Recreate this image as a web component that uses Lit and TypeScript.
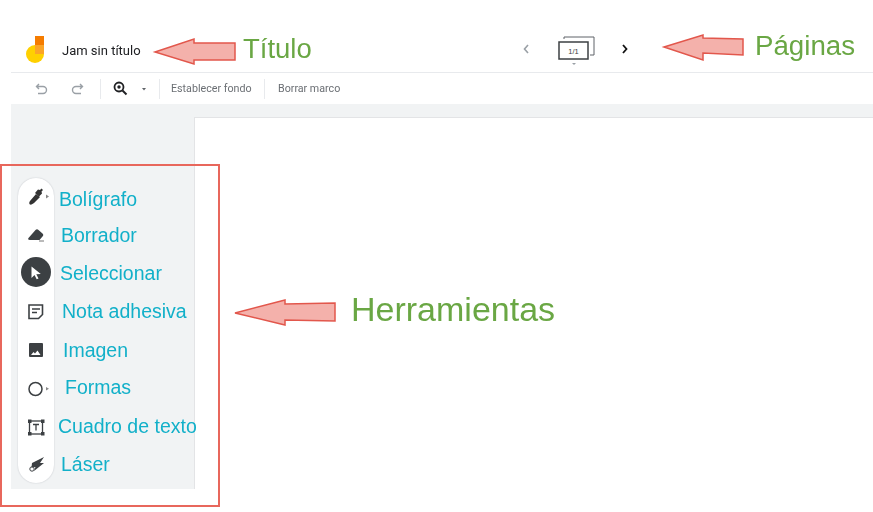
import { LitElement, html, css, svg } from "lit";
import { customElement } from "lit/decorators.js";

const tools = [
  svg`<path d="M30 201l6-7 4 3-6 6c-1 1-3 2-4 1.500s-1-2.500 0-3.500z" fill="#333"/><path d="M35 193l3-3.500 2 .5 1.500-1.500 1.500 1.500-1.500 1.500 .5 2-3 3z" fill="#333"/><path d="M46 194.500l3 2-3 2z" fill="#888"/>`,
  svg`<path d="M28.500 238l7-8c1-1 2-1 3 0l4 3.500c1 1 1 2 0 3l-3 3.500H30c-1.500 0-2.500-1-1.500-2z" fill="#3c4043"/><path d="M39 241h5" stroke="#777" stroke-width="1"/>`,
  svg`<circle cx="36" cy="272" r="15" fill="#3c4043"/><path d="M31.500 266.500l0 11.500 3-3 2.200 4.300 1.800-.9-2.200-4.200 4.500-.2z" fill="#fff"/>`,
  svg`<path d="M29 305h13.500v9.500l-4 4H29z" fill="none" stroke="#3c4043" stroke-width="1.600"/><path d="M32 309h8M32 312.500h5" stroke="#3c4043" stroke-width="1.300"/>`,
  svg`<rect x="29" y="343" width="14" height="14" rx="1" fill="#3c4043"/><path d="M31 355l2.500-3 1.500 1.500 2.500-3 3 4.500z" fill="#fff"/>`,
  svg`<circle cx="35.500" cy="389" r="6.500" fill="none" stroke="#3c4043" stroke-width="1.500"/><path d="M46 387l3 1.800-3 1.800z" fill="#888"/>`,
  svg`<rect x="29.500" y="421" width="13" height="13" fill="none" stroke="#3c4043" stroke-width="1.300"/><rect x="28" y="419.500" width="3.500" height="3.500" fill="#3c4043"/><rect x="41" y="419.500" width="3.500" height="3.500" fill="#3c4043"/><rect x="28" y="432" width="3.500" height="3.500" fill="#3c4043"/><rect x="41" y="432" width="3.500" height="3.500" fill="#3c4043"/><path d="M33 424.500h6M36 424.500v6" stroke="#3c4043" stroke-width="1.300" fill="none"/>`,
  svg`<path d="M32 463l12-6-4 6h4l-10 8 1.500-4-4 .5z" fill="#3c4043"/><circle cx="32" cy="469" r="2.200" fill="none" stroke="#3c4043"/>`,
];

const labels = [
  { t: "Bolígrafo", x: 59, y: 199.5 },
  { t: "Borrador", x: 61, y: 235.5 },
  { t: "Seleccionar", x: 60, y: 273.5 },
  { t: "Nota adhesiva", x: 62, y: 311.5 },
  { t: "Imagen", x: 63, y: 350.5 },
  { t: "Formas", x: 65, y: 387.5 },
  { t: "Cuadro de texto", x: 58, y: 426.5 },
  { t: "Láser", x: 61, y: 464.5 },
];

const heads = [
  { t: "Título", x: 243, y: 48.5, s: 27.5 },
  { t: "Páginas", x: 755, y: 46, s: 27.7 },
  { t: "Herramientas", x: 351, y: 309, s: 34 },
];

@customElement("app-root")
export class AppRoot extends LitElement {
  static styles = css`
    :host { display: block; width: 873px; height: 512px; position: relative; overflow: hidden; background: #fff; font-family: Roboto, "Liberation Sans", sans-serif; }
    .app { margin-left: 11px; height: 489px; display: flex; flex-direction: column; filter: blur(0.35px); }
    .header { height: 73px; box-sizing: border-box; border-bottom: 1px solid #e8eaed; display: flex; align-items: center; padding: 26px 0 0 14px; flex: none; }
    .logo { width: 20px; height: 28px; flex: none; margin-right: 17px; }
    .title { font-size: 13px; color: #202124; width: 80px; margin-top: 3px; }
    .pager { display: flex; align-items: center; margin-left: 380px; }
    .pager svg { display: block; }
    .stack { margin-left: 28px; margin-top: 4px; }
    .next { margin-left: 25px; }
    .toolbar { height: 31px; flex: none; display: flex; align-items: center; font-size: 10.7px; color: #6b6f74; }
    .toolbar svg { display: block; flex: none; }
    .sep { width: 1px; height: 20px; background: #e8eaed; flex: none; }
    .undo { margin-left: 24px; }
    .redo { margin-left: 21px; margin-right: 16px; }
    .zoom { margin-left: 12px; margin-right: 13px; }
    .caret { margin-right: 12px; }
    .fondo { width: 81px; margin-left: 11px; margin-right: 12px; white-space: nowrap; }
    .marco { margin-left: 13px; white-space: nowrap; }
    .body { flex: 1; background: #f1f3f4; padding-top: 13px; display: flex; min-height: 0; }
    .rail { width: 183px; flex: none; box-sizing: border-box; padding: 61px 0 0 7px; }
    .pill { width: 36px; height: 305px; background: #fff; border-radius: 18px; box-shadow: 0 0 1.500px #b9bcc2; }
    .page { flex: 1; background: #fff; border-top: 1px solid #e3e4e6; border-left: 1px solid #e3e4e6; }
    .tools { position: absolute; inset: 0; width: 873px; height: 512px; filter: blur(0.35px); }
    .overlay { position: absolute; inset: 0; width: 873px; height: 512px; }
    .frame { position: absolute; left: 0; top: 164px; width: 220px; height: 343px; box-sizing: border-box; border: 2px solid #e8675c; }
    .label { position: absolute; font-family: "Liberation Sans", Arial, sans-serif; font-size: 19.5px; color: #12b0c9; line-height: 1; transform: translateY(-50%); white-space: nowrap; filter: blur(0.25px); }
    .head { color: #6aa744; }
  `;

  render() {
    return html`
      <div class="app">
        <div class="header">
          <svg class="logo" viewBox="0 0 20 28">
            <circle cx="10" cy="19" r="9" fill="#ffd000"/>
            <rect x="10" y="1" width="9" height="9" fill="#f57c00"/>
            <rect x="10" y="10" width="9" height="9" fill="#fba527"/>
          </svg>
          <div class="title">Jam sin título</div>
          <div class="pager">
            <svg width="8" height="12" viewBox="0 0 8 12"><path d="M6 2L2.500 6 6 10" fill="none" stroke="#9aa0a6" stroke-width="1.600"/></svg>
            <svg class="stack" width="38" height="30" viewBox="0 0 38 30">
              <path d="M6 3V1h30v18h-4" fill="none" stroke="#5f6368" stroke-width="1"/>
              <rect x="1" y="6" width="29" height="17" fill="#fff" stroke="#3c4043" stroke-width="1.500"/>
              <text x="15.500" y="17.500" font-size="7.500" font-family="Liberation Sans" text-anchor="middle" fill="#3c4043">1/1</text>
              <path d="M14 27h4l-2 2z" fill="#9aa0a6"/>
            </svg>
            <svg class="next" width="8" height="12" viewBox="0 0 8 12"><path d="M2 2l3.500 4L2 10" fill="none" stroke="#111" stroke-width="1.800"/></svg>
          </div>
        </div>
        <div class="toolbar">
          <svg class="undo" width="14" height="14" viewBox="0 0 14 14"><path d="M4 2L1.500 4.500 4 7M2 4.500h6a3.500 3.500 0 0 1 0 7H3" fill="none" stroke="#9aa0a6" stroke-width="1.400"/></svg>
          <svg class="redo" width="14" height="14" viewBox="0 0 14 14"><path d="M10 2l2.500 2.500L10 7M12 4.500H6a3.500 3.500 0 0 0 0 7h5" fill="none" stroke="#9aa0a6" stroke-width="1.400"/></svg>
          <div class="sep"></div>
          <svg class="zoom" width="15" height="15" viewBox="0 0 15 15"><circle cx="6" cy="6" r="4.500" fill="none" stroke="#202124" stroke-width="1.800"/><circle cx="6" cy="6" r="1.700" fill="#202124"/><path d="M9.500 9.500L13.500 13.500" stroke="#202124" stroke-width="2"/></svg>
          <svg class="caret" width="6" height="4" viewBox="0 0 6 4"><path d="M1 1h4L3 3.500z" fill="#5f6368"/></svg>
          <div class="sep"></div>
          <div class="fondo">Establecer fondo</div>
          <div class="sep"></div>
          <div class="marco">Borrar marco</div>
        </div>
        <div class="body">
          <div class="rail"><div class="pill"></div></div>
          <div class="page"></div>
        </div>
      </div>
      <svg class="tools" viewBox="0 0 873 512">${tools}</svg>
      <svg class="overlay" viewBox="0 0 873 512">
        <g fill="#f4b1ab" stroke="#e2574c" stroke-width="1.500" stroke-linejoin="miter">
          <path d="M155 52L194 39V43H235V60L194 60V64Z"/>
          <path d="M664 47L703 35V38L743 39V55L703 53V60Z"/>
          <path d="M235 313L285 300V304L335 303V321L285 320V325Z"/>
        </g>
      </svg>
      <div class="frame"></div>
      ${labels.map((l) => html`<div class="label" style="left:${l.x}px;top:${l.y}px">${l.t}</div>`)}
      ${heads.map((h) => html`<div class="label head" style="left:${h.x}px;top:${h.y}px;font-size:${h.s}px">${h.t}</div>`)}
    `;
  }
}
